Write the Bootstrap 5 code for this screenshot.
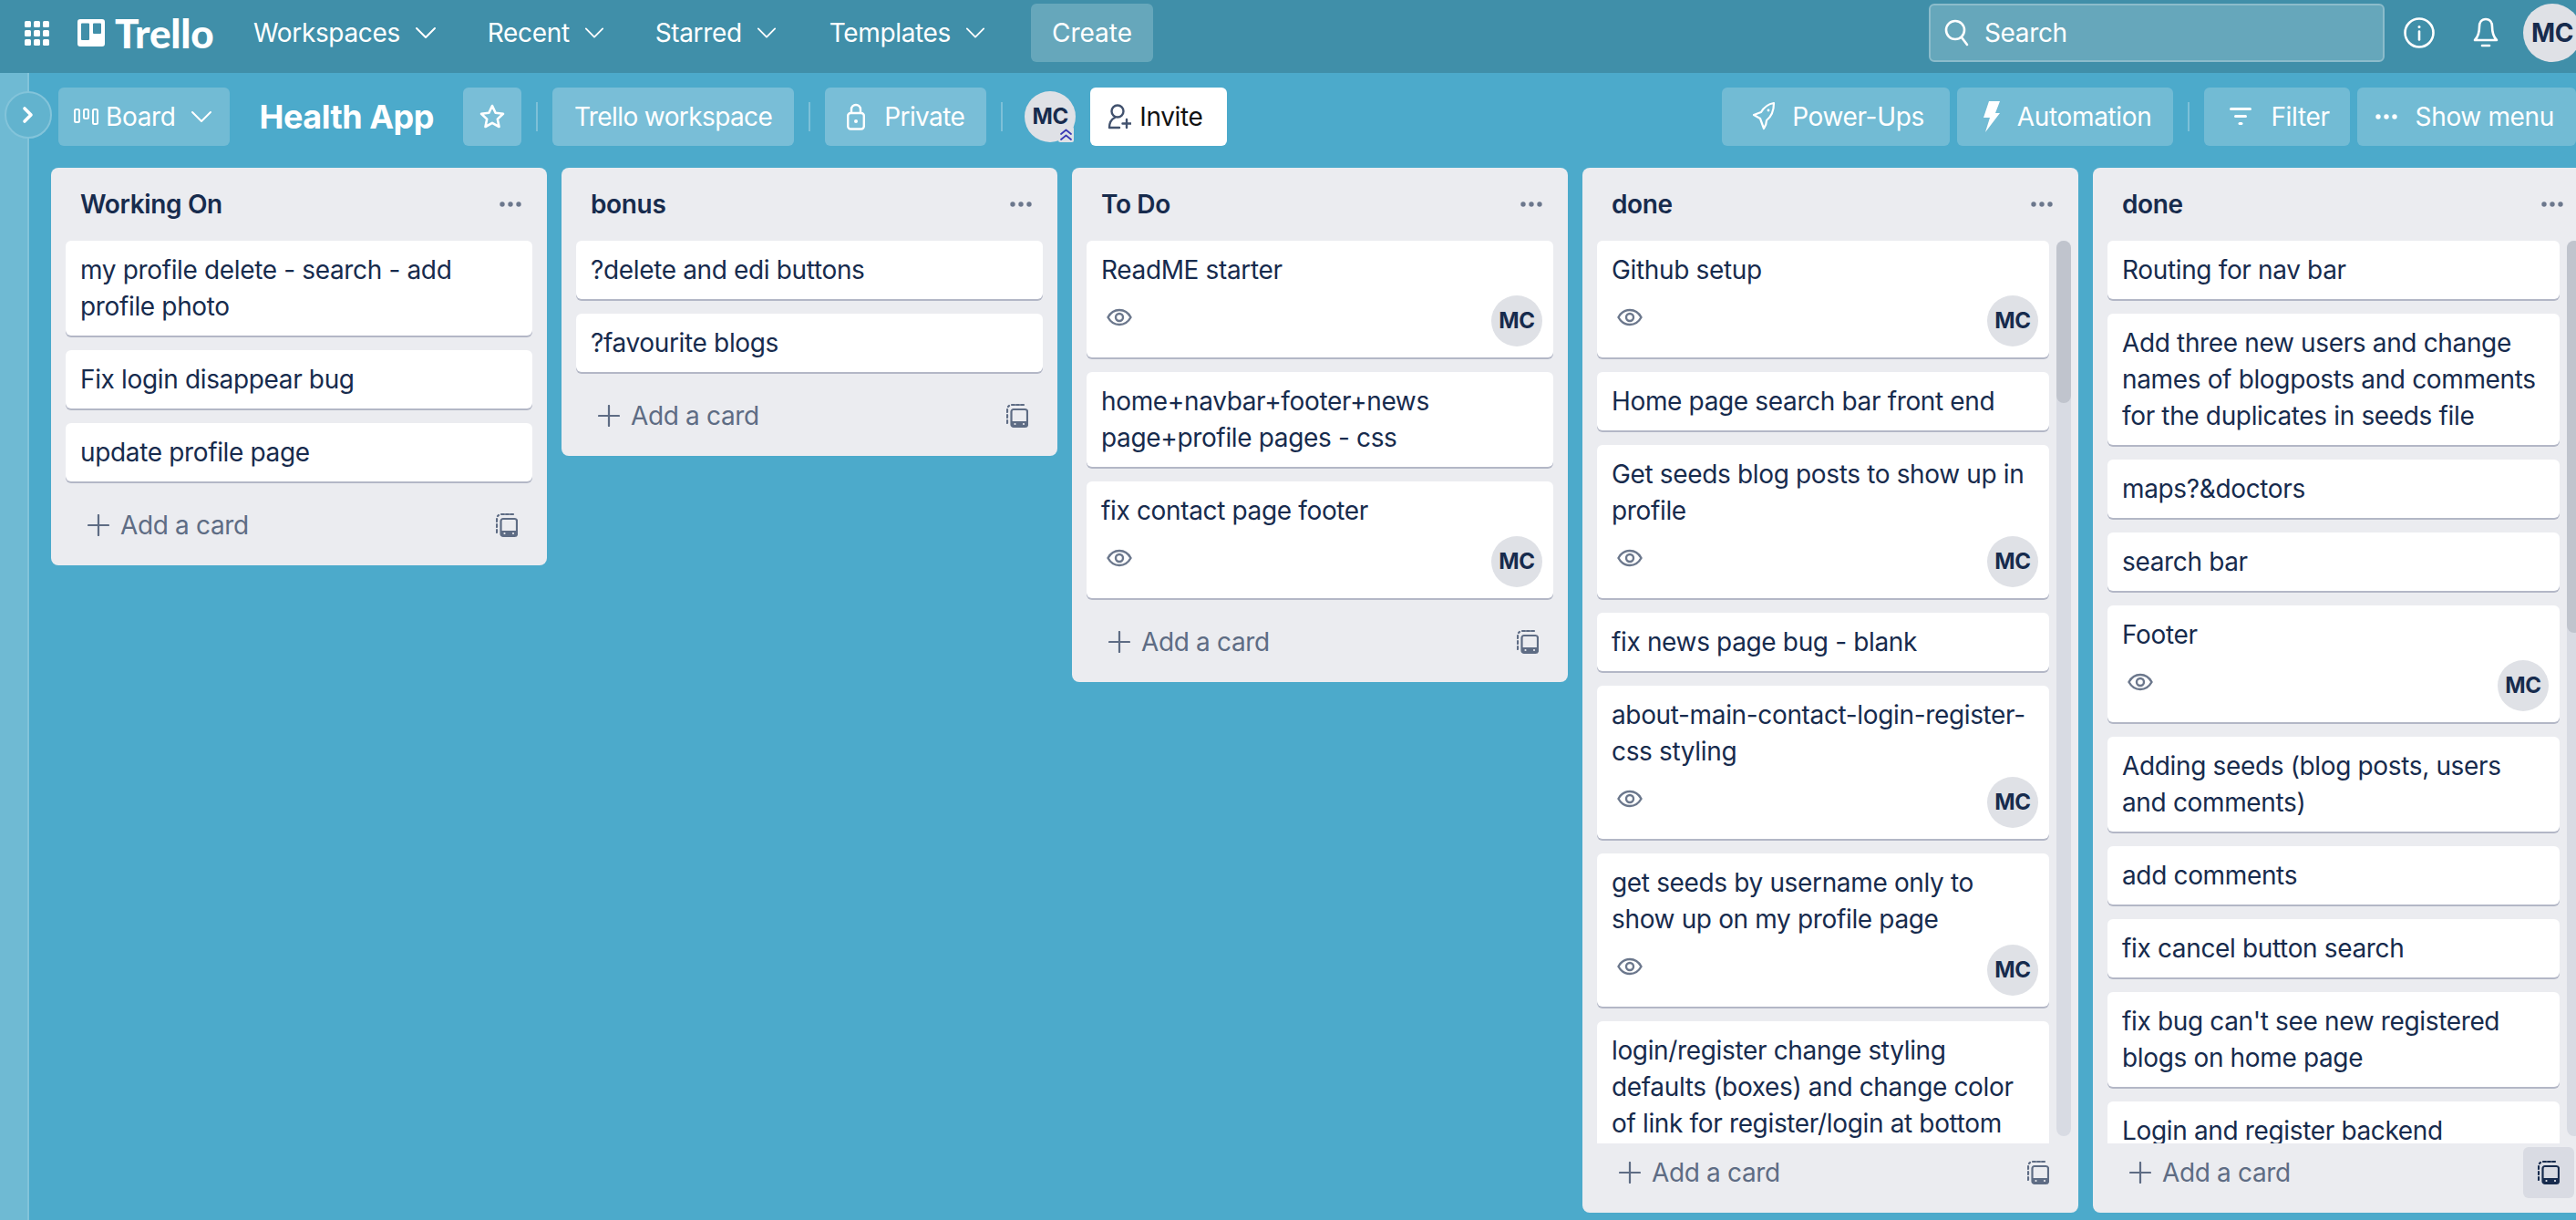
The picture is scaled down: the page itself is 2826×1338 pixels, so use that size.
<!DOCTYPE html>
<html lang="en">
<head>
<meta charset="UTF-8">
<title>Health App | Trello</title>
<link rel="stylesheet" href="https://cdn.jsdelivr.net/npm/bootstrap@5.3.0/dist/css/bootstrap.min.css">
<style>
    html, body { height: 100%; }
    body { background: #4caacb; font-family: Inter, "Liberation Sans", sans-serif; font-size: 28px; line-height: 40px; letter-spacing: -.35px; color: #172b4d; overflow: hidden; }
    svg { display: block; flex: none; }

    /* top bar */
    .topbar { height: 80px; padding: 4px 0 12px 27px; background: #408fa9; flex-wrap: nowrap; justify-content: flex-start; color: #fff; }
    .logo-mark { margin-left: 31px; }
    .logo-word { font-family: Lato, sans-serif; font-weight: 900; font-size: 44px; line-height: 64px; margin-left: 11px; width: 122px; letter-spacing: -.2px; }
    .top-link { display: flex; align-items: center; gap: 16px; height: 64px; color: #fff; font-size: 28px; font-weight: 400; white-space: nowrap; }
    .top-link.first { margin-left: 30px; }
    .top-link + .top-link { margin-left: 56px; }
    .create-btn { height: 64px; width: 134px; margin-left: 50px; padding: 0; background: #66a7bb; border: 0; border-radius: 6px; color: #fff; font-size: 28px; line-height: 64px; }
    .search-box { width: 500px; height: 64px; padding: 0 14px; gap: 15px; background: #66a7bb; border: 2px solid #8cbccb; border-radius: 6px; color: #fff; }
    .user-dot { width: 64px; height: 64px; margin-right: -6px; border-radius: 50%; background: #dfe1e6; color: #172b4d; font-weight: 700; }

    /* board header */
    .board-head { height: 104px; padding: 16px 0 24px 64px; color: #fff; }
    .head-btn { height: 64px; padding: 0 24px; background: #72bbd4; border: 0; border-radius: 6px; color: #fff; font-size: 28px; line-height: 40px; letter-spacing: -.35px; white-space: nowrap; }
    .head-btn.lighter { background: #79bed7; letter-spacing: -.6px; }
    .head-btn:hover { background: #80c2d9; color: #fff; }
    .board-title { margin: 0 32px 0 33px; font-size: 36px; line-height: 64px; font-weight: 700; letter-spacing: -.5px; white-space: nowrap; }
    .head-sep { width: 2px; height: 32px; margin: 0 16px; background: #7dc0d8; flex: none; }
    .member-wrap { position: relative; width: 56px; height: 56px; margin: 0 16px 0 8px; }
    .member-dot { width: 56px; height: 56px; border-radius: 50%; background: #dfe1e6; color: #172b4d; font-size: 24px; font-weight: 700; }
    .admin-mark { position: absolute; right: 2px; bottom: 0; width: 17px; height: 17px; background: #dfe1e6; border-radius: 2px; }
    .invite-btn { height: 64px; width: 150px; padding: 0 0 0 19px; gap: 9px; background: #fff; border: 0; border-radius: 6px; color: #111; font-size: 28px; letter-spacing: -.35px; }

    /* collapsed sidebar */
    .side-strip { position: absolute; left: 0; top: 80px; bottom: 0; width: 32px; background: #6fbad3; border-right: 2px solid #83c4da; }
    .side-toggle { position: absolute; left: 5px; top: 100px; width: 52px; height: 52px; border-radius: 50%; background: #62b3ce; border: 2px solid #83c4da; }

    /* lists */
    .lists { height: 1146px; padding-left: 56px; gap: 16px; overflow: hidden; }
    .tlist { position: relative; width: 544px; flex: none; background: #ebecf0; border-radius: 8px; }
    .tlist-head { height: 80px; padding: 0 28px 0 32px; }
    .tlist-name { font-weight: 600; }
    .tscroll { padding: 0 16px; }
    .tscroll.long { height: 990px; overflow: hidden; padding-right: 32px; }
    .tcard { padding: 12px 16px 4px; margin-bottom: 16px; background: #fff; border-radius: 6px; box-shadow: 0 2px 0 #b3b7c6; }
    .tcard-title { margin-bottom: 8px; }
    .tcard-foot { margin: 0 -4px 8px 6px; }
    .eye-icon { margin-top: 10px; color: #6b778c; }
    .mini-dot { width: 56px; height: 56px; border-radius: 50%; background: #dfe1e6; font-size: 24px; font-weight: 700; }
    .tlist-foot { height: 76px; padding: 4px 16px 16px 40px; color: #5e6c84; }
    .add-link { gap: 12px; }
    .tmpl-btn { width: 56px; height: 56px; border-radius: 6px; }
    .tmpl-btn.active { background: #d9dbe3; color: #172b4d; }
    .sbar { position: absolute; right: 8px; top: 80px; width: 16px; height: 982px; background: #d8dbe3; border-radius: 8px; }
    .sbar-thumb { background: #c0c4cd; border-radius: 8px; }
    .dots-icon { color: #6b778c; }
</style>
</head>
<body class="d-flex flex-column">

<svg width="0" height="0" class="position-absolute">
    <symbol id="i-down" viewBox="0 0 24 24"><path d="M2 7l10 10L22 7" fill="none" stroke="currentColor" stroke-width="2" stroke-linecap="round" stroke-linejoin="round"/></symbol>
    <symbol id="i-eye" viewBox="0 0 28 28"><path d="M1.500 14C4.500 8.500 9 6 14 6s9.500 2.500 12.500 8c-3 5.500-7.500 8-12.500 8S4.500 19.500 1.500 14z" fill="none" stroke="currentColor" stroke-width="2.400"/><circle cx="14" cy="14" r="4" fill="none" stroke="currentColor" stroke-width="2.400"/></symbol>
    <symbol id="i-plus" viewBox="0 0 24 24"><path d="M12 1v22M1 12h22" fill="none" stroke="currentColor" stroke-width="2.200" stroke-linecap="round"/></symbol>
    <symbol id="i-tmpl" viewBox="0 0 24 28">
        <path d="M6 2h3M11 2h3M16 2h3M1 7v3M1 13v3M1 19v3M3 3l-1 1" fill="none" stroke="currentColor" stroke-width="2.200" stroke-linecap="round"/>
        <rect x="5.500" y="7" width="17.500" height="19" rx="2.500" fill="none" stroke="currentColor" stroke-width="2.200"/>
        <path d="M5.500 20h17.500v3.500a2.500 2.500 0 0 1-2.500 2.500H8a2.500 2.500 0 0 1-2.500-2.500z" fill="currentColor"/>
        <circle cx="9.500" cy="23" r="1.100" fill="#ebecf0"/><circle cx="19" cy="23" r="1.100" fill="#ebecf0"/>
    </symbol>
    <symbol id="i-dots" viewBox="0 0 24 6"><circle cx="3" cy="3" r="2.700" fill="currentColor"/><circle cx="12" cy="3" r="2.700" fill="currentColor"/><circle cx="21" cy="3" r="2.700" fill="currentColor"/></symbol>
</svg>

<!-- top bar -->
<nav class="navbar topbar">
    <svg width="27" height="27" viewBox="0 0 27 27" fill="#fff">
        <rect x="0" y="0" width="7" height="7" rx="1.500"/><rect x="10" y="0" width="7" height="7" rx="1.500"/><rect x="20" y="0" width="7" height="7" rx="1.500"/>
        <rect x="0" y="10" width="7" height="7" rx="1.500"/><rect x="10" y="10" width="7" height="7" rx="1.500"/><rect x="20" y="10" width="7" height="7" rx="1.500"/>
        <rect x="0" y="20" width="7" height="7" rx="1.500"/><rect x="10" y="20" width="7" height="7" rx="1.500"/><rect x="20" y="20" width="7" height="7" rx="1.500"/>
    </svg>
    <svg class="logo-mark" width="30" height="30" viewBox="0 0 30 30"><path fill="#fff" fill-rule="evenodd" d="M3 0h24a3 3 0 0 1 3 3v24a3 3 0 0 1-3 3H3a3 3 0 0 1-3-3V3a3 3 0 0 1 3-3zM5 4.500a1 1 0 0 0-1 1V22a1 1 0 0 0 1 1h7a1 1 0 0 0 1-1V5.500a1 1 0 0 0-1-1zM18 4.500a1 1 0 0 0-1 1V15a1 1 0 0 0 1 1h7a1 1 0 0 0 1-1V5.500a1 1 0 0 0-1-1z"/></svg>
    <span class="logo-word">Trello</span>
    <a class="top-link first text-decoration-none" href="#">Workspaces <svg width="24" height="24"><use href="#i-down"/></svg></a>
    <a class="top-link text-decoration-none" href="#">Recent <svg width="22" height="22"><use href="#i-down"/></svg></a>
    <a class="top-link text-decoration-none" href="#">Starred <svg width="22" height="22"><use href="#i-down"/></svg></a>
    <a class="top-link text-decoration-none" href="#" style="margin-left:58px">Templates <svg width="22" height="22"><use href="#i-down"/></svg></a>
    <button class="btn create-btn">Create</button>

    <div class="search-box d-flex align-items-center ms-auto">
        <svg width="30" height="32" viewBox="0 0 30 32" fill="none" stroke="#fff" stroke-width="2.600" stroke-linecap="round"><circle cx="13" cy="13" r="10"/><path d="M20 21l6 8"/></svg>
        <span>Search</span>
    </div>
    <svg style="margin-left:21px" width="34" height="34" viewBox="0 0 34 34" fill="none" stroke="#fff" stroke-width="2.600" stroke-linecap="round"><circle cx="17" cy="17" r="15.500"/><path d="M17 15.500v9"/><circle cx="17" cy="10.500" r="1.500" fill="#fff" stroke="none"/></svg>
    <svg style="margin-left:42px" width="28" height="34" viewBox="0 0 28 34" fill="none" stroke="#fff" stroke-width="2.600" stroke-linejoin="round"><path d="M14 2c-5 0-7 4-7 8 0 8-2 12-5 15h24c-3-3-5-7-5-15 0-4-2-8-7-8z"/><path d="M10 31h8" stroke-linecap="round"/></svg>
    <div class="user-dot d-flex align-items-center justify-content-center" style="margin-left:27px">MC</div>
</nav>

<div class="side-strip"></div>
<div class="side-toggle d-flex align-items-center justify-content-center">
    <svg width="14" height="20" viewBox="0 0 14 20" fill="none" stroke="#fff" stroke-width="3.600" stroke-linecap="round" stroke-linejoin="round"><path d="M3 3l7 7-7 7"/></svg>
</div>

<!-- board header -->
<div class="board-head d-flex align-items-start">
    <button class="btn head-btn d-flex align-items-center gap-2" style="padding:0 19px 0 17px">
        <svg width="27" height="18" viewBox="0 0 27 18" fill="none" stroke="#fff" stroke-width="2"><rect x="1" y="1" width="5" height="14" rx="1.500"/><rect x="11" y="1" width="5" height="10" rx="1.500"/><rect x="21" y="1" width="5" height="16" rx="1.500"/></svg>
        Board
        <svg class="ms-2" width="24" height="24"><use href="#i-down"/></svg>
    </button>
    <h1 class="board-title">Health App</h1>
    <button class="btn head-btn lighter d-flex align-items-center justify-content-center" style="width:64px;padding:0">
        <svg width="30" height="30" viewBox="0 0 30 30" fill="none" stroke="#fff" stroke-width="2.600" stroke-linejoin="round"><path d="M15 3l3.600 7.800 8.400 1-6.200 5.800 1.700 8.400-7.500-4.200-7.500 4.200 1.700-8.400L3 11.800l8.400-1z"/></svg>
    </button>
    <span class="head-sep mt-3"></span>
    <button class="btn head-btn lighter">Trello workspace</button>
    <span class="head-sep mt-3"></span>
    <button class="btn head-btn lighter d-flex align-items-center" style="gap:21px">
        <svg width="20" height="30" viewBox="0 0 20 30" fill="none" stroke="#fff" stroke-width="2.400"><rect x="1.200" y="11" width="17.600" height="17.500" rx="3"/><path d="M5 11V7a5 5 0 0 1 10 0v4"/><circle cx="10" cy="20" r="2" fill="#fff" stroke="none"/></svg>
        Private
    </button>
    <span class="head-sep mt-3"></span>
    <div class="member-wrap mt-1">
        <div class="member-dot d-flex align-items-center justify-content-center">MC</div>
        <span class="admin-mark d-flex align-items-center justify-content-center">
            <svg width="15" height="15" viewBox="0 0 15 15" fill="none" stroke="#3b3ab5" stroke-width="1.800" stroke-linecap="round" stroke-linejoin="round"><path d="M2 7l5.500-4.500L13 7M2 13l5.500-4.500L13 13"/></svg>
        </span>
    </div>
    <button class="btn invite-btn d-flex align-items-center">
        <svg width="26" height="30" viewBox="0 0 26 30" fill="none" stroke="#42526e" stroke-width="2.400" stroke-linecap="round"><circle cx="11" cy="9" r="6.500"/><path d="M2 27c0-6 2-9 6-11M13 27H2M21 18v9M16.500 22.500h9"/></svg>
        Invite
    </button>

    <button class="btn head-btn d-flex align-items-center ms-auto" style="gap:18px;padding:0 28px 0 33px">
        <svg width="26" height="34" viewBox="0 0 26 34" fill="none" stroke="#fff" stroke-width="2.200" stroke-linejoin="round"><path d="M24 2c-6 1-11 5-14 10l-8 3 7 4 4 11c2-3 3-6 3-9 5-4 8-11 8-19z"/><circle cx="18" cy="10" r="1.400" fill="#fff" stroke="none"/></svg>
        Power-Ups
    </button>
    <button class="btn head-btn d-flex align-items-center ms-2" style="gap:18px;padding:0 24px 0 28px">
        <svg width="20" height="36" viewBox="0 0 20 36" fill="#fff"><path d="M7 1h12l-5 13h5L3 35l5-16H1z"/></svg>
        Automation
    </button>
    <span class="head-sep mt-3"></span>
    <button class="btn head-btn d-flex align-items-center" style="gap:21px;padding:0 22px 0 28px">
        <svg width="24" height="20" viewBox="0 0 24 20" fill="#fff"><rect width="24" height="3" rx="1.500"/><rect x="5" y="8" width="14" height="3" rx="1.500"/><rect x="9.500" y="16" width="5" height="3" rx="1.500"/></svg>
        Filter
    </button>
    <button class="btn head-btn d-flex align-items-center ms-2" style="gap:20px;padding:0 24px 0 20px">
        <svg width="24" height="6" style="color:#fff"><use href="#i-dots"/></svg>
        Show menu
    </button>
</div>

<!-- lists -->
<div class="lists d-flex align-items-start">

    <div class="tlist">
        <div class="tlist-head d-flex align-items-center justify-content-between">
            <span class="tlist-name">Working On</span>
            <svg class="dots-icon" width="24" height="6"><use href="#i-dots"/></svg>
        </div>
        <div class="tscroll">
            <div class="tcard"><div class="tcard-title">my profile delete - search - add profile photo</div></div>
            <div class="tcard"><div class="tcard-title">Fix login disappear bug</div></div>
            <div class="tcard"><div class="tcard-title">update profile page</div></div>
        </div>
        <div class="tlist-foot d-flex align-items-center justify-content-between">
            <span class="add-link d-flex align-items-center"><svg width="24" height="24"><use href="#i-plus"/></svg>Add a card</span>
            <span class="tmpl-btn d-flex align-items-center justify-content-center"><svg width="24" height="28"><use href="#i-tmpl"/></svg></span>
        </div>
    </div>

    <div class="tlist">
        <div class="tlist-head d-flex align-items-center justify-content-between">
            <span class="tlist-name">bonus</span>
            <svg class="dots-icon" width="24" height="6"><use href="#i-dots"/></svg>
        </div>
        <div class="tscroll">
            <div class="tcard"><div class="tcard-title">?delete and edi buttons</div></div>
            <div class="tcard"><div class="tcard-title">?favourite blogs</div></div>
        </div>
        <div class="tlist-foot d-flex align-items-center justify-content-between">
            <span class="add-link d-flex align-items-center"><svg width="24" height="24"><use href="#i-plus"/></svg>Add a card</span>
            <span class="tmpl-btn d-flex align-items-center justify-content-center"><svg width="24" height="28"><use href="#i-tmpl"/></svg></span>
        </div>
    </div>

    <div class="tlist">
        <div class="tlist-head d-flex align-items-center justify-content-between">
            <span class="tlist-name">To Do</span>
            <svg class="dots-icon" width="24" height="6"><use href="#i-dots"/></svg>
        </div>
        <div class="tscroll">
            <div class="tcard">
                <div class="tcard-title">ReadME starter</div>
                <div class="tcard-foot d-flex justify-content-between"><svg class="eye-icon" width="28" height="28"><use href="#i-eye"/></svg><span class="mini-dot d-flex align-items-center justify-content-center">MC</span></div>
            </div>
            <div class="tcard"><div class="tcard-title">home+navbar+footer+news page+profile pages - css</div></div>
            <div class="tcard">
                <div class="tcard-title">fix contact page footer</div>
                <div class="tcard-foot d-flex justify-content-between"><svg class="eye-icon" width="28" height="28"><use href="#i-eye"/></svg><span class="mini-dot d-flex align-items-center justify-content-center">MC</span></div>
            </div>
        </div>
        <div class="tlist-foot d-flex align-items-center justify-content-between">
            <span class="add-link d-flex align-items-center"><svg width="24" height="24"><use href="#i-plus"/></svg>Add a card</span>
            <span class="tmpl-btn d-flex align-items-center justify-content-center"><svg width="24" height="28"><use href="#i-tmpl"/></svg></span>
        </div>
    </div>

    <div class="tlist">
        <div class="tlist-head d-flex align-items-center justify-content-between">
            <span class="tlist-name">done</span>
            <svg class="dots-icon" width="24" height="6"><use href="#i-dots"/></svg>
        </div>
        <div class="tscroll long">
            <div class="tcard">
                <div class="tcard-title">Github setup</div>
                <div class="tcard-foot d-flex justify-content-between"><svg class="eye-icon" width="28" height="28"><use href="#i-eye"/></svg><span class="mini-dot d-flex align-items-center justify-content-center">MC</span></div>
            </div>
            <div class="tcard"><div class="tcard-title">Home page search bar front end</div></div>
            <div class="tcard">
                <div class="tcard-title">Get seeds blog posts to show up in profile</div>
                <div class="tcard-foot d-flex justify-content-between"><svg class="eye-icon" width="28" height="28"><use href="#i-eye"/></svg><span class="mini-dot d-flex align-items-center justify-content-center">MC</span></div>
            </div>
            <div class="tcard"><div class="tcard-title">fix news page bug - blank</div></div>
            <div class="tcard">
                <div class="tcard-title">about-main-contact-login-register-css styling</div>
                <div class="tcard-foot d-flex justify-content-between"><svg class="eye-icon" width="28" height="28"><use href="#i-eye"/></svg><span class="mini-dot d-flex align-items-center justify-content-center">MC</span></div>
            </div>
            <div class="tcard">
                <div class="tcard-title">get seeds by username only to show up on my profile page</div>
                <div class="tcard-foot d-flex justify-content-between"><svg class="eye-icon" width="28" height="28"><use href="#i-eye"/></svg><span class="mini-dot d-flex align-items-center justify-content-center">MC</span></div>
            </div>
            <div class="tcard"><div class="tcard-title">login/register change styling defaults (boxes) and change color of link for register/login at bottom</div></div>
        </div>
        <div class="sbar"><div class="sbar-thumb" style="height:178px"></div></div>
        <div class="tlist-foot d-flex align-items-center justify-content-between">
            <span class="add-link d-flex align-items-center"><svg width="24" height="24"><use href="#i-plus"/></svg>Add a card</span>
            <span class="tmpl-btn d-flex align-items-center justify-content-center"><svg width="24" height="28"><use href="#i-tmpl"/></svg></span>
        </div>
    </div>

    <div class="tlist">
        <div class="tlist-head d-flex align-items-center justify-content-between">
            <span class="tlist-name">done</span>
            <svg class="dots-icon" width="24" height="6"><use href="#i-dots"/></svg>
        </div>
        <div class="tscroll long">
            <div class="tcard"><div class="tcard-title">Routing for nav bar</div></div>
            <div class="tcard"><div class="tcard-title">Add three new users and change names of blogposts and comments for the duplicates in seeds file</div></div>
            <div class="tcard"><div class="tcard-title">maps?&amp;doctors</div></div>
            <div class="tcard"><div class="tcard-title">search bar</div></div>
            <div class="tcard">
                <div class="tcard-title">Footer</div>
                <div class="tcard-foot d-flex justify-content-between"><svg class="eye-icon" width="28" height="28"><use href="#i-eye"/></svg><span class="mini-dot d-flex align-items-center justify-content-center">MC</span></div>
            </div>
            <div class="tcard"><div class="tcard-title">Adding seeds (blog posts, users and comments)</div></div>
            <div class="tcard"><div class="tcard-title">add comments</div></div>
            <div class="tcard"><div class="tcard-title">fix cancel button search</div></div>
            <div class="tcard"><div class="tcard-title">fix bug can't see new registered blogs on home page</div></div>
            <div class="tcard"><div class="tcard-title">Login and register backend</div></div>
        </div>
        <div class="sbar"><div class="sbar-thumb" style="height:430px"></div></div>
        <div class="tlist-foot d-flex align-items-center justify-content-between">
            <span class="add-link d-flex align-items-center"><svg width="24" height="24"><use href="#i-plus"/></svg>Add a card</span>
            <span class="tmpl-btn active d-flex align-items-center justify-content-center"><svg width="24" height="28"><use href="#i-tmpl"/></svg></span>
        </div>
    </div>

</div>

<script src="https://cdn.jsdelivr.net/npm/bootstrap@5.3.0/dist/js/bootstrap.bundle.min.js"></script>
</body>
</html>
